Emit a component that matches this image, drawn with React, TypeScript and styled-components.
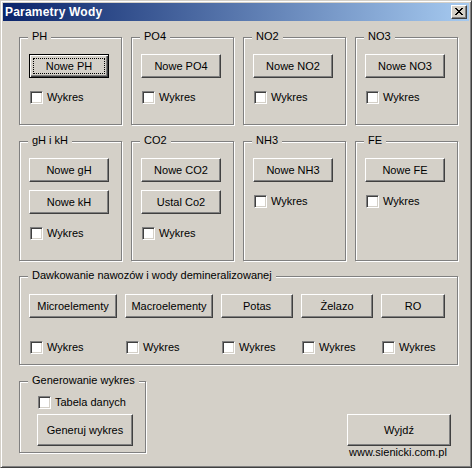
import React from 'react';
import styled, { createGlobalStyle } from 'styled-components';

const GlobalStyle = createGlobalStyle`
  body {
    margin: 0;
    background: #d4d0c8;
  }
`;

// okno w stylu Windows 2000
const Window = styled.div`
  width: 472px;
  height: 468px;
  box-sizing: border-box;
  border: 1px solid;
  border-color: #d4d0c8 #404040 #404040 #d4d0c8;
  box-shadow: inset 1px 1px 0 #fff, inset -1px -1px 0 #808080;
  padding: 2px;
  background: #d4d0c8;
  display: flex;
  flex-direction: column;
  font-family: "Liberation Sans", Arial, sans-serif;
  font-size: 11px;
  color: #000;
`;

const TitleBar = styled.div`
  height: 18px;
  flex-shrink: 0;
  display: flex;
  align-items: center;
  justify-content: space-between;
  padding: 0 2px;
  background: linear-gradient(to right, #0a246a, #a6caf0);
`;

const Title = styled.span`
  color: #fff;
  font-weight: bold;
  font-size: 12px;
  letter-spacing: 0.2px;
  line-height: 15px;
`;

const CloseButton = styled.button`
  width: 16px;
  height: 14px;
  padding: 0;
  box-sizing: border-box;
  border: 1px solid;
  border-color: #fff #404040 #404040 #fff;
  box-shadow: inset -1px -1px 0 #808080;
  background: #d4d0c8;
  display: flex;
  align-items: flex-start;
  justify-content: flex-start;

  svg {
    display: block;
    margin: 2px 0 0 3px;
  }
`;

const Body = styled.div`
  padding: 16px 11px 0 16px;
  display: flex;
  flex-direction: column;
`;

const GroupGrid = styled.div`
  display: grid;
  grid-template-columns: repeat(4, 103px);
  grid-template-rows: 88px 120px;
  column-gap: 9px;
  row-gap: 16px;
`;

const Group = styled.div<{ $width?: number; $height?: number; $top?: number }>`
  position: relative;
  box-sizing: border-box;
  border: 1px solid #808080;
  box-shadow: 1px 1px 0 #fff, inset 1px 1px 0 #fff;
  ${(p) => (p.$width ? `width: ${p.$width}px;` : '')}
  ${(p) => (p.$height ? `height: ${p.$height}px;` : '')}
  ${(p) => (p.$top ? `margin-top: ${p.$top}px;` : '')}
`;

const GroupLabel = styled.span`
  position: absolute;
  top: -8px;
  left: 8px;
  padding: 0 4px;
  line-height: 13px;
  background: #d4d0c8;
  white-space: nowrap;
`;

const GroupContent = styled.div`
  padding: 16px 0 0 9px;
  display: flex;
  flex-direction: column;
  align-items: flex-start;
  gap: 8px;
`;

const Button = styled.button<{ $w: number; $h?: number; $default?: boolean }>`
  position: relative;
  width: ${(p) => p.$w}px;
  height: ${(p) => p.$h ?? 24}px;
  padding: 0;
  box-sizing: border-box;
  background: #d4d0c8;
  font-family: inherit;
  font-size: 11px;
  color: #000;
  border: 1px solid;
  border-color: ${(p) => (p.$default ? '#000' : '#fff #404040 #404040 #fff')};
  box-shadow: ${(p) =>
    p.$default
      ? 'inset 1px 1px 0 #fff, inset -1px -1px 0 #404040, inset -2px -2px 0 #808080'
      : 'inset -1px -1px 0 #808080'};

  ${(p) =>
    p.$default &&
    `&::after {
      content: '';
      position: absolute;
      inset: 3px;
      border: 1px dotted #000;
    }`}
`;

const CheckRow = styled.label<{ $top?: number }>`
  display: flex;
  align-items: center;
  gap: 4px;
  height: 13px;
  margin-left: 1px;
  margin-top: ${(p) => p.$top ?? 0}px;
  line-height: 13px;
  white-space: nowrap;
`;

const CheckBox = styled.span`
  width: 13px;
  height: 13px;
  box-sizing: border-box;
  border: 1px solid;
  border-color: #808080 #fff #fff #808080;
  box-shadow: inset 1px 1px 0 #404040, inset -1px -1px 0 #d4d0c8;
  background: #fff;
  flex-shrink: 0;
`;

const DoseGrid = styled.div`
  padding: 17px 0 0 9px;
  display: grid;
  grid-template-columns: 88px 88px 72px 72px 64px;
  column-gap: 8px;
  row-gap: 23px;
  align-items: start;
`;

const BottomRow = styled.div`
  margin-top: 16px;
  display: flex;
  justify-content: space-between;
  align-items: flex-start;
`;

const GenerateContent = styled.div`
  padding: 14px 0 0 17px;
  display: flex;
  flex-direction: column;
  align-items: flex-start;
  gap: 5px;
`;

const ExitColumn = styled.div`
  padding-top: 33px;
  margin-right: 7px;
  display: flex;
  flex-direction: column;
  align-items: center;
`;

const SiteLink = styled.span`
  line-height: 13px;
  margin-right: 2px;
`;

const CloseGlyph = () => (
  <svg width="8" height="7" viewBox="0 0 8 7" shapeRendering="crispEdges">
    <path
      fill="#000"
      d="M0 0h2v1H0zM6 0h2v1H6zM1 1h2v1H1zM5 1h2v1H5zM2 2h4v1H2zM3 3h2v1H3zM2 4h4v1H2zM1 5h2v1H1zM5 5h2v1H5zM0 6h2v1H0zM6 6h2v1H6z"
    />
  </svg>
);

const Check: React.FC<{ label: string; top?: number }> = ({ label, top }) => (
  <CheckRow $top={top}>
    <CheckBox />
    {label}
  </CheckRow>
);

interface ParamGroup {
  name: string;
  buttons: string[];
}

const groups: ParamGroup[] = [
  { name: 'PH', buttons: ['Nowe PH'] },
  { name: 'PO4', buttons: ['Nowe PO4'] },
  { name: 'NO2', buttons: ['Nowe NO2'] },
  { name: 'NO3', buttons: ['Nowe NO3'] },
  { name: 'gH i kH', buttons: ['Nowe gH', 'Nowe kH'] },
  { name: 'CO2', buttons: ['Nowe CO2', 'Ustal Co2'] },
  { name: 'NH3', buttons: ['Nowe NH3'] },
  { name: 'FE', buttons: ['Nowe FE'] },
];

const doses = [
  { label: 'Microelementy', w: 88 },
  { label: 'Macroelementy', w: 88 },
  { label: 'Potas', w: 72 },
  { label: 'Żelazo', w: 72 },
  { label: 'RO', w: 64 },
];

const App: React.FC = () => {
  return (
    <>
      <GlobalStyle />
      <Window>
        <TitleBar>
          <Title>Parametry Wody</Title>
          <CloseButton>
            <CloseGlyph />
          </CloseButton>
        </TitleBar>
        <Body>
          <GroupGrid>
            {groups.map((g, i) => (
              <Group key={g.name}>
                <GroupLabel>{g.name}</GroupLabel>
                <GroupContent>
                  {g.buttons.map((b) => (
                    <Button key={b} $w={80} $default={i === 0}>
                      {b}
                    </Button>
                  ))}
                  <Check label="Wykres" top={5} />
                </GroupContent>
              </Group>
            ))}
          </GroupGrid>

          <Group $height={89} $top={15}>
            <GroupLabel>Dawkowanie nawozów i wody demineralizowanej</GroupLabel>
            <DoseGrid>
              {doses.map((d) => (
                <Button key={d.label} $w={d.w}>
                  {d.label}
                </Button>
              ))}
              {doses.map((d) => (
                <Check key={d.label} label="Wykres" />
              ))}
            </DoseGrid>
          </Group>

          <BottomRow>
            <Group $width={127} $height={72}>
              <GroupLabel>Generowanie wykres</GroupLabel>
              <GenerateContent>
                <Check label="Tabela danych" />
                <Button $w={96} $h={32}>
                  Generuj wykres
                </Button>
              </GenerateContent>
            </Group>
            <ExitColumn>
              <Button $w={104} $h={32}>
                Wyjdź
              </Button>
              <SiteLink>www.sienicki.com.pl</SiteLink>
            </ExitColumn>
          </BottomRow>
        </Body>
      </Window>
    </>
  );
};

export default App;
